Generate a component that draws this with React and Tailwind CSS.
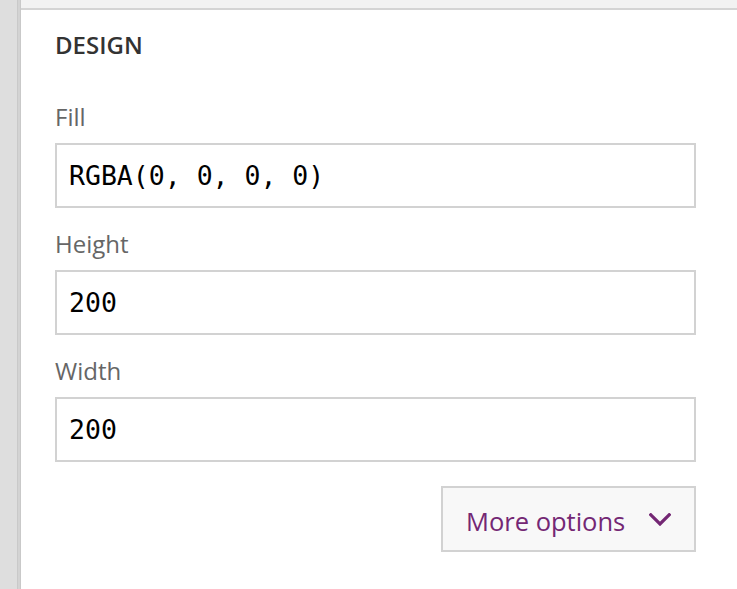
import React from "react";

function Field({ label, value, first }) {
  return (
    <div className="flex flex-col">
      <div
        className={
          first
            ? "text-[24px] leading-[32px] text-[#666666] mt-[40px] mb-[10px]"
            : "text-[24px] leading-[32px] text-[#666666] mt-[20px] mb-[10px]"
        }
      >
        {label}
      </div>
      <div
        className="h-[65px] border-2 border-[#d2d2d2] bg-white flex items-center pl-[12px] text-[26.5px] text-black"
        style={{ fontFamily: '"DejaVu Sans Mono", monospace' }}
      >
        {value}
      </div>
    </div>
  );
}

export default function App() {
  return (
    <div
      className="flex w-[737px] h-[589px] overflow-hidden bg-white"
      style={{ fontFamily: '"Open Sans", "Noto Sans", sans-serif' }}
    >
      <div className="w-[17px] bg-[#dedede]" />
      <div className="w-[4px] bg-[#d3d3d3] border-l border-r border-[#c9c9c9]" />
      <div className="flex-1 flex flex-col">
        <div className="h-[10px] bg-[#f2f2f2] border-b-2 border-[#d4d4d4]" />
        <div className="flex-1 bg-white pl-[34px] pr-[41px] pt-[19px]">
          <div className="text-[24px] leading-[32px] font-semibold text-[#333333]">DESIGN</div>
          <Field label="Fill" value="RGBA(0, 0, 0, 0)" first />
          <Field label="Height" value="200" />
          <Field label="Width" value="200" />
          <div className="flex justify-end mt-[24px]">
            <button className="w-[255px] h-[66px] border-2 border-[#d2d2d2] bg-[#f8f8f8] flex items-center justify-between pl-[23px] pr-[23px] text-[25.5px] text-[#742774]">
              <span className="pt-[4px]">More options</span>
              <svg width="22" height="13" viewBox="0 0 22 13" fill="none">
                <polyline points="1.8,1.8 11,11 20.2,1.8" stroke="#742774" strokeWidth="3.2" strokeLinecap="square" />
              </svg>
            </button>
          </div>
        </div>
      </div>
    </div>
  );
}
